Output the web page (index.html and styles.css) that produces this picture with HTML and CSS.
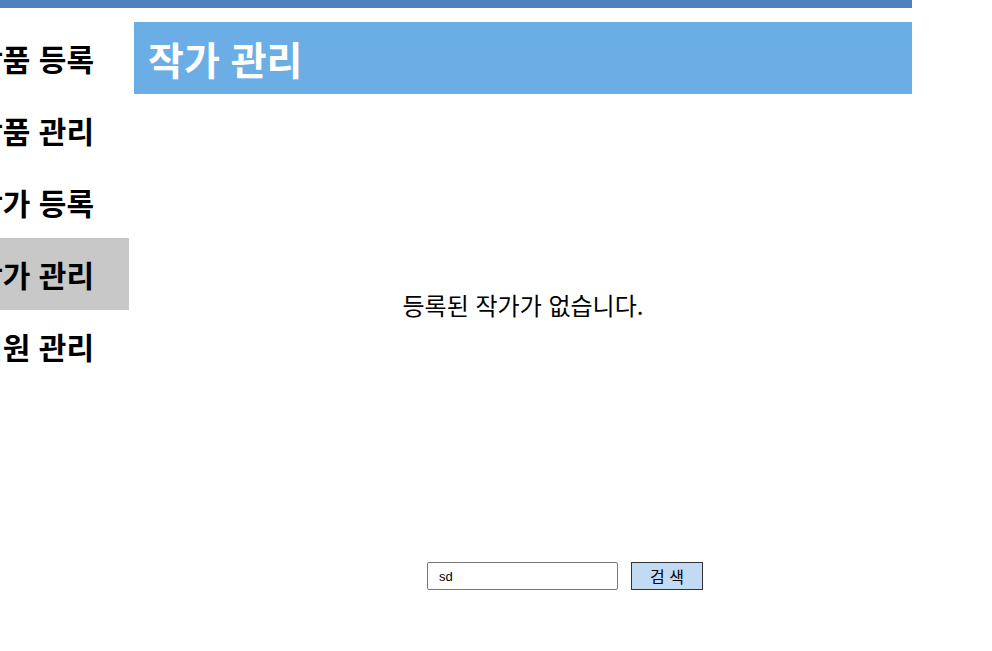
FILE: index.html
```html
<!DOCTYPE html>
<html lang="ko">
<head>
    <meta charset="UTF-8">
    <meta name="viewport" content="width=device-width, initial-scale=1.0">
    <title>작가 관리</title>
    <link rel="stylesheet" href="styles.css">
</head>
<body>
    <div class="top-bar"></div>

    <div class="layout">
        <nav class="side-menu">
            <a href="#" class="menu-item">상품 등록</a>
            <a href="#" class="menu-item">상품 관리</a>
            <a href="#" class="menu-item">작가 등록</a>
            <a href="#" class="menu-item active">작가 관리</a>
            <a href="#" class="menu-item">회원 관리</a>
        </nav>

        <main class="content">
            <div class="page-title">
                <h1>작가 관리</h1>
            </div>

            <div class="artist-list">
                <p class="empty-msg">등록된 작가가 없습니다.</p>
            </div>

            <form class="search-form">
                <input type="text" class="search-input" value="sd">
                <button type="button" class="search-btn">검 색</button>
            </form>
        </main>
    </div>
</body>
</html>
```

FILE: styles.css
```css
body {
    margin: 0;
    padding: 0;
    font-family: "Noto Sans CJK KR", "Noto Sans", sans-serif;
    background-color: #fff;
    color: #000;
}

.top-bar {
    width: 912px;
    height: 8px;
    background-color: #4f81bd;
}

.layout {
    display: flex;
    gap: 5px;
    width: 912px;
    margin-top: 14px;
}

.side-menu {
    width: 129px;
    flex-shrink: 0;
    display: flex;
    flex-direction: column;
    overflow: hidden;
}

.menu-item {
    height: 72px;
    display: flex;
    align-items: center;
    justify-content: flex-end;
    padding-right: 35px;
    font-size: 30px;
    font-weight: bold;
    color: #000;
    text-decoration: none;
    white-space: nowrap;
}

.menu-item.active {
    background-color: #c8c8c8;
}

.content {
    flex: 1;
    display: flex;
    flex-direction: column;
}

.page-title {
    height: 72px;
    background-color: #6aaee5;
    display: flex;
    align-items: center;
    padding-left: 14px;
}

.page-title h1 {
    margin: 0;
    font-size: 39px;
    font-weight: bold;
    color: #fff;
}

.artist-list {
    height: 420px;
    display: flex;
    align-items: center;
    justify-content: center;
}

.empty-msg {
    margin: 0;
    font-size: 24px;
}

.search-form {
    display: flex;
    gap: 13px;
    margin-top: 48px;
    padding-left: 293px;
}

.search-input {
    width: 191px;
    height: 28px;
    box-sizing: border-box;
    border: 1px solid #767676;
    border-radius: 2px;
    padding: 0 11px;
    font-family: "Liberation Sans", Arial, sans-serif;
    font-size: 13px;
}

.search-btn {
    width: 72px;
    height: 28px;
    border: 1px solid #333;
    background-color: #c3daf5;
    font-family: "Noto Sans CJK KR", sans-serif;
    font-size: 16px;
    cursor: pointer;
}
```
